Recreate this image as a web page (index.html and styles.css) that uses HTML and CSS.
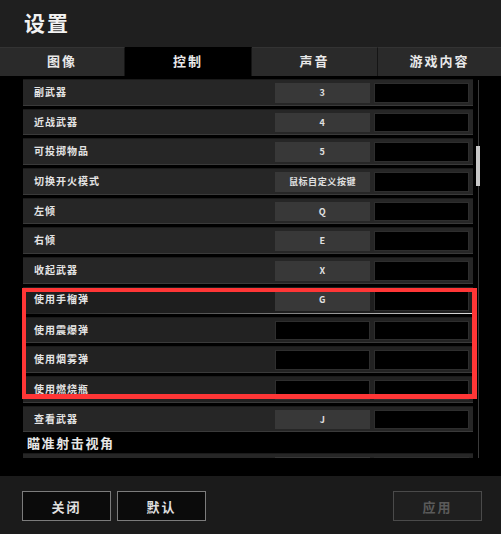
FILE: index.html
```html
<!DOCTYPE html>
<html lang="zh-CN">
<head>
<meta charset="UTF-8">
<title>设置</title>
<link rel="stylesheet" href="styles.css">
</head>
<body>
  <div class="header">
    <h1 class="title">设置</h1>
  </div>

  <div class="tabs">
    <div class="tab">图像</div>
    <div class="tab active">控制</div>
    <div class="tab">声音</div>
    <div class="tab">游戏内容</div>
  </div>

  <div class="content">
    <div class="list">
      <div class="row"><span class="label">副武器</span><span class="key">3</span><span class="key empty"></span></div>
      <div class="row"><span class="label">近战武器</span><span class="key">4</span><span class="key empty"></span></div>
      <div class="row"><span class="label">可投掷物品</span><span class="key">5</span><span class="key empty"></span></div>
      <div class="row"><span class="label">切换开火模式</span><span class="key">鼠标自定义按键</span><span class="key empty"></span></div>
      <div class="row"><span class="label">左倾</span><span class="key">Q</span><span class="key empty"></span></div>
      <div class="row"><span class="label">右倾</span><span class="key">E</span><span class="key empty"></span></div>
      <div class="row"><span class="label">收起武器</span><span class="key">X</span><span class="key empty"></span></div>
      <div class="row hover"><span class="label">使用手榴弹</span><span class="key">G</span><span class="key empty"></span></div>
      <div class="row dim"><span class="label">使用震爆弹</span><span class="key empty"></span><span class="key empty"></span></div>
      <div class="row dim"><span class="label">使用烟雾弹</span><span class="key empty"></span><span class="key empty"></span></div>
      <div class="row dim"><span class="label">使用燃烧瓶</span><span class="key empty"></span><span class="key empty"></span></div>
      <div class="row"><span class="label">查看武器</span><span class="key">J</span><span class="key empty"></span></div>
      <div class="section">瞄准射击视角</div>
      <div class="row"><span class="label"></span><span class="key"></span><span class="key empty"></span></div>
    </div>

    <!-- barra de desplazamiento -->
    <div class="scrollbar"><div class="thumb"></div></div>

    <!-- recuadro rojo de resaltado -->
    <div class="highlight"></div>
  </div>

  <div class="footer">
    <button class="btn">关闭</button>
    <button class="btn">默认</button>
    <button class="btn disabled">应用</button>
  </div>
</body>
</html>
```

FILE: styles.css
```css
body {
    margin: 0;
    width: 501px;
    height: 534px;
    background-color: #000;
    font-family: "Noto Sans CJK SC", "Noto Sans", sans-serif;
    color: #e6e6e6;
    overflow: hidden;
}

/* Cabecera */
.header {
    height: 47px;
    background-color: #1f1f1f;
    box-sizing: border-box;
    padding-left: 24px;
}

.title {
    margin: 0;
    font-size: 21px;
    line-height: 44px;
    font-weight: 700;
    letter-spacing: 2px;
    color: #f2f2f2;
}

/* Pestañas */
.tabs {
    display: grid;
    grid-template-columns: 125px 127px 126px 123px;
    height: 29px;
}

.tab {
    background-color: #2a2a2a;
    border-right: 1px solid #151515;
    border-top: 1px solid #333;
    text-align: center;
    font-size: 13px;
    font-weight: 700;
    letter-spacing: 2px;
    line-height: 26px;
    color: #e8e8e8;
}

.tab:last-child {
    border-right: none;
}

.tab.active {
    background-color: #000;
    border-top-color: #000;
}

/* Zona de la lista */
.content {
    position: relative;
    height: 400px;
    background-color: #000;
}

.list {
    height: 382px;
    overflow: hidden;
    box-sizing: border-box;
    padding: 3px 0 0 23px;
    width: 473px;
}

.row {
    display: flex;
    align-items: stretch;
    height: 26.7px;
    margin-bottom: 3px;
    box-sizing: border-box;
    padding: 3px 4px 2px 0;
    background-color: #262626;
    border-bottom: 1px solid #3a3a3a;
    border-top: 1px solid #1a1a1a;
}

.label {
    flex: 1;
    padding-left: 11px;
    font-size: 10px;
    font-weight: 700;
    letter-spacing: 1px;
    line-height: 18px;
    color: #e4e4e4;
}

.key {
    width: 95px;
    background-color: #383838;
    text-align: center;
    font-size: 9px;
    font-weight: 700;
    letter-spacing: 0.6px;
    line-height: 20px;
    color: #e0e0e0;
    box-sizing: border-box;
}

.key + .key {
    margin-left: 4px;
}

.key.empty {
    background-color: #000;
    border: 1px solid #2e2e2e;
}

.row.hover {
    background-color: #1e1e1e;
    border-bottom: 1px solid #999;
    border-image: linear-gradient(to right, #222, #555 40%, #ddd) 1;
    border-top: none;
    border-left: none;
    border-right: none;
}

.row.hover .key:first-of-type {
    background-color: #424242;
    line-height: 16px;
}

.row.dim {
    background-color: #222;
}

.section {
    font-size: 13px;
    font-weight: 700;
    letter-spacing: 1.6px;
    line-height: 16px;
    padding-left: 4px;
    margin: 0 0 2px;
    color: #e6e6e6;
}

/* Barra de desplazamiento */
.scrollbar {
    position: absolute;
    top: 4px;
    left: 478px;
    width: 1px;
    height: 378px;
    background-color: #3a3a3a;
}

.thumb {
    position: absolute;
    top: 66px;
    left: -2px;
    width: 4px;
    height: 40px;
    background-color: #c8c8c8;
}

/* Recuadro rojo */
.highlight {
    position: absolute;
    top: 212px;
    left: 22px;
    width: 455px;
    height: 111px;
    box-sizing: border-box;
    border: 4px solid #ff3636;
    border-bottom-width: 5px;
    border-right-width: 5px;
}

/* Pie con botones */
.footer {
    display: flex;
    gap: 6px;
    height: 58px;
    box-sizing: border-box;
    padding: 15px 19px 0 22px;
    background-color: #1b1b1b;
}

.btn {
    width: 89px;
    height: 30px;
    background-color: #0b0b0b;
    border: 1px solid #7c7c7c;
    font-family: "Noto Sans CJK SC", "Noto Sans", sans-serif;
    font-size: 13px;
    font-weight: 700;
    letter-spacing: 2px;
    color: #e0e0e0;
    padding: 0;
}

.btn.disabled {
    margin-left: auto;
    background-color: #1f1f1f;
    border-color: #4a4a4a;
    color: #5a5a5a;
}
```
